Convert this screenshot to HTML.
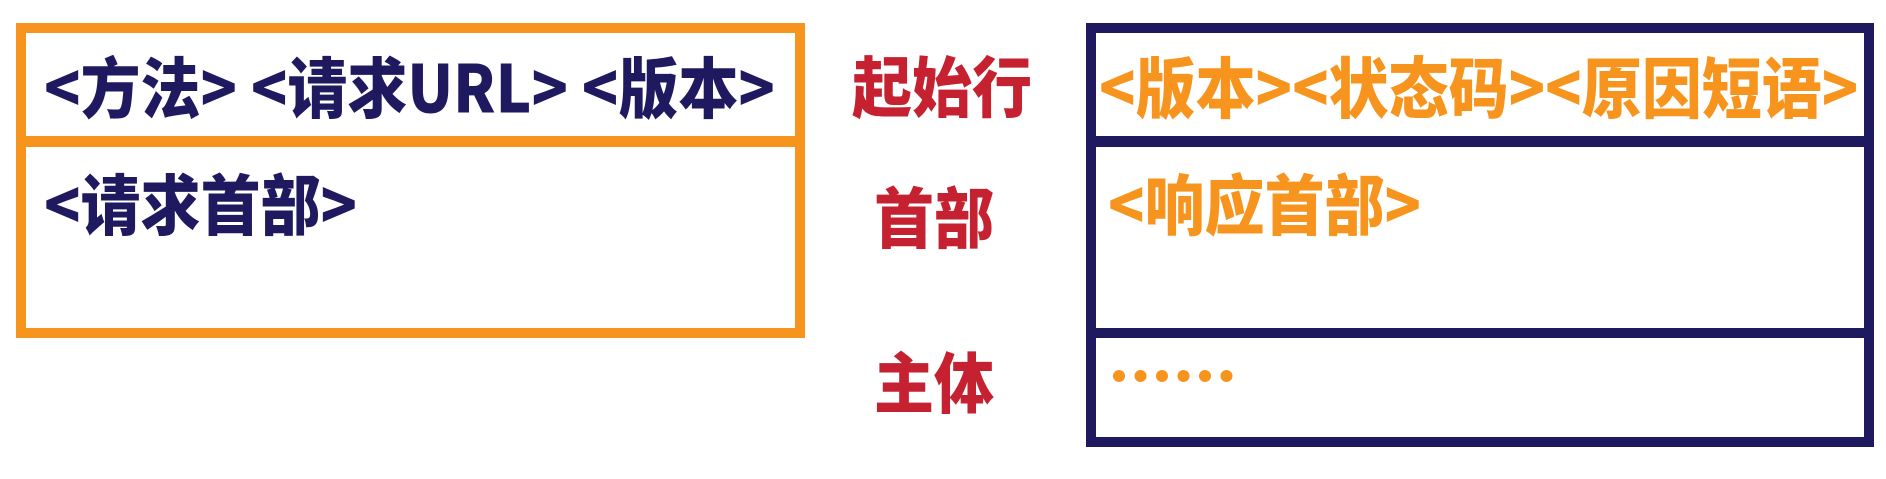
<!DOCTYPE html>
<html><head><meta charset="utf-8"><style>
body{margin:0;width:1886px;height:479px;background:#fff;position:relative;overflow:hidden;font-family:"Liberation Sans","Noto Sans CJK SC",sans-serif;font-weight:bold}
.b{position:absolute;box-sizing:border-box}
.t{position:absolute;white-space:nowrap;font-size:60px;line-height:1;font-family:"Noto Sans CJK SC",sans-serif;font-weight:900;transform:scaleY(1.1);transform-origin:0 50%}
.n{color:#1f1a60}.o{color:#f7941d}.r{color:#c52130}
</style></head><body>
<div class="b" style="left:16px;top:23px;width:789px;height:315px;border:10px solid #f7941d"></div>
<div class="b" style="left:16px;top:136px;width:789px;height:11px;background:#f7941d"></div>
<div class="b" style="left:1086px;top:23px;width:788px;height:424px;border:10px solid #1f1a60"></div>
<div class="b" style="left:1086px;top:136px;width:788px;height:11px;background:#1f1a60"></div>
<div class="b" style="left:1086px;top:328px;width:788px;height:10px;background:#1f1a60"></div>

<div class="t n" style="left:44px;top:55px">&lt;方法&gt; &lt;请求URL&gt; &lt;版本&gt;</div>
<div class="t n" style="left:44px;top:172px">&lt;请求首部&gt;</div>
<div class="t r" style="left:852px;top:54px">起始行</div>
<div class="t r" style="left:874px;top:185px">首部</div>
<div class="t r" style="left:874px;top:350px">主体</div>
<div class="t o" style="left:1099px;top:55px">&lt;版本&gt;&lt;状态码&gt;&lt;原因短语&gt;</div>
<div class="t o" style="left:1108px;top:172px">&lt;响应首部&gt;</div>
<svg style="position:absolute;left:0;top:0" width="1886" height="479">
<g fill="#f7941d">
<circle cx="1119" cy="376" r="6"/><circle cx="1140.5" cy="376" r="6"/><circle cx="1162" cy="376" r="6"/><circle cx="1183.5" cy="376" r="6"/><circle cx="1205" cy="376" r="6"/><circle cx="1226.5" cy="376" r="6"/>
</g></svg>
</body></html>
